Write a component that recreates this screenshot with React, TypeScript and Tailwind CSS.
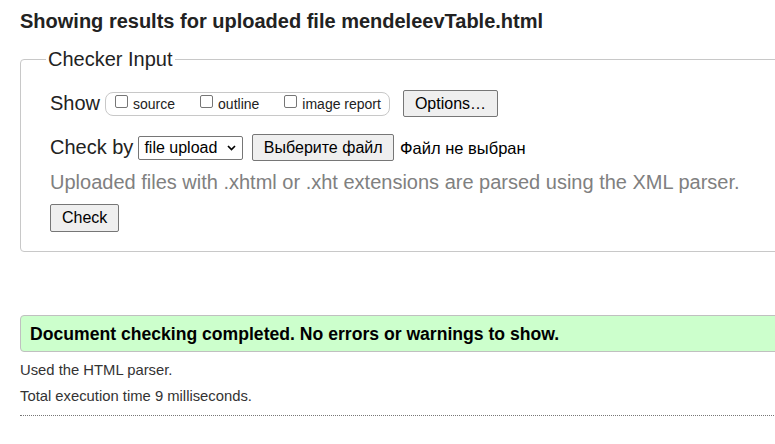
import React from "react";

function Box({ label }: { label: string }) {
  return (
    <span className="flex items-center">
      <span className="mb-[5px] h-[13px] w-[13px] rounded-[2px] border border-[#767676] bg-white" />
      <span className="ml-[5px] text-[14px] leading-[16px] text-[#222]">{label}</span>
    </span>
  );
}

export default function App() {
  return (
    <div className="h-[444px] w-[775px] overflow-hidden bg-white font-['Liberation_Sans',Arial,sans-serif] text-[#222]">
      <div className="w-[840px] pl-[20px]">
        <h2 className="pt-[10px] text-[20px] font-bold leading-[23px] text-[#222]">
          Showing results for uploaded file mendeleevTable.html
        </h2>
        <fieldset className="mt-[15px] rounded-[4px] border border-[#c8c8c8] pb-[19px] pl-[29px] pr-4 pt-[19px]">
          <legend className="-ml-[4px] px-[2px] text-[20px] leading-[23px] text-[#222]">Checker Input</legend>
          <div className="flex h-[27px] items-center">
            <span className="text-[20px] leading-[23px]">Show</span>
            <div className="ml-[5px] flex h-[24px] items-center rounded-[8px] border border-[#c8c8c8] pl-[9px] pr-[8px]">
              <Box label="source" />
              <span className="w-[25px]" />
              <Box label="outline" />
              <span className="w-[25px]" />
              <Box label="image report" />
            </div>
            <button className="ml-[13px] h-[27px] rounded-[2px] border border-[#767676] bg-[#efefef] px-[11px] text-[16px] leading-[18px] text-black">
              Options…
            </button>
          </div>
          <div className="mt-[17px] flex h-[27px] items-center">
            <span className="text-[20px] leading-[23px]">Check by</span>
            <div className="ml-[5px] flex h-[24px] items-center rounded-[2px] border border-[#767676] bg-white pl-[5px] pr-[6px]">
              <span className="text-[16px] leading-[18px] text-black">file upload</span>
              <svg className="ml-[10px]" width="9" height="6" viewBox="0 0 9 6">
                <path d="M1 1 L4.5 4.5 L8 1" fill="none" stroke="#000" strokeWidth="1.7" />
              </svg>
            </div>
            <button className="ml-[9px] h-[27px] rounded-[2px] border border-[#767676] bg-[#efefef] px-[10.5px] text-[16px] leading-[18px] text-black">
              Выберите файл
            </button>
            <span className="ml-[6px] text-[16.5px] leading-[18px] text-black">Файл не выбран</span>
          </div>
          <p className="mt-[10px] text-[20px] leading-[23px] text-[#808080]">
            Uploaded files with .xhtml or .xht extensions are parsed using the XML parser.
          </p>
          <button className="mt-[10px] h-[28px] rounded-[2px] border border-[#767676] bg-[#efefef] px-[11px] text-[16px] leading-[18px] text-black">
            Check
          </button>
        </fieldset>
        <div className="mt-[63px] flex h-[37px] items-center rounded-[4px] border border-[#c0c0c0] bg-[#ccffcc] pl-[9px]">
          <span className="text-[17.6px] font-bold leading-[20px] text-black">
            Document checking completed. No errors or warnings to show.
          </span>
        </div>
        <p className="mt-[10px] text-[14.8px] leading-[16px] text-[#333]">Used the HTML parser.</p>
        <p className="mt-[10px] text-[14.8px] leading-[16px] text-[#333]">Total execution time 9 milliseconds.</p>
        <div className="mt-[11px] border-t border-dotted border-[#777]" />
      </div>
    </div>
  );
}
